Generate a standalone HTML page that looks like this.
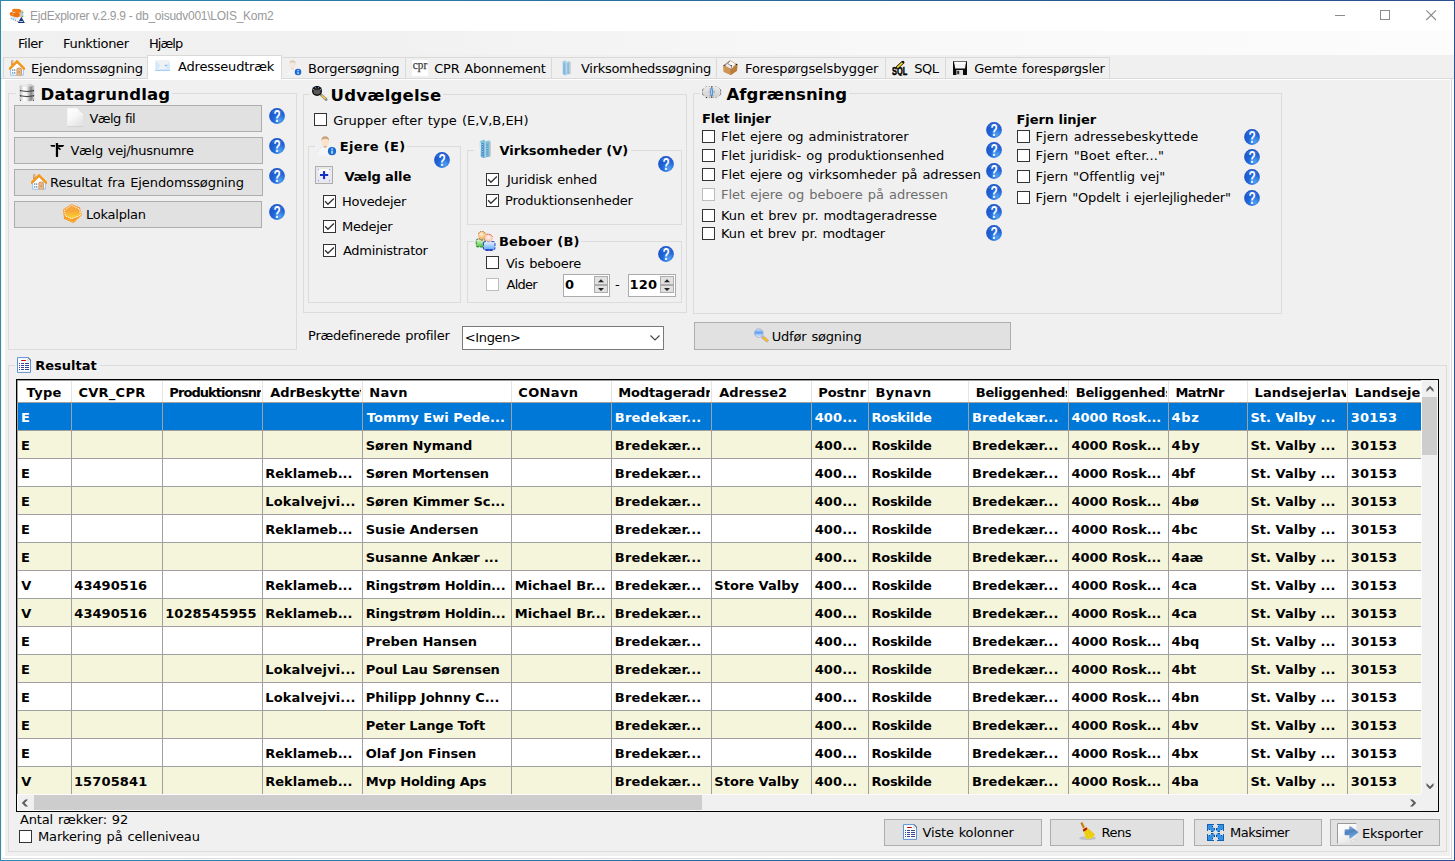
<!DOCTYPE html>
<html lang="da"><head><meta charset="utf-8"><title>EjdExplorer v.2.9.9</title>
<style>
html,body{margin:0;padding:0}
body{width:1455px;height:861px;overflow:hidden;background:#f0f0f0;position:relative;font-family:"DejaVu Sans","Liberation Sans",sans-serif;font-size:13px;line-height:16px;color:#000}
div,span,svg.ic{position:absolute;box-sizing:content-box}
span{white-space:pre;display:block}
.b{font-weight:bold}
.h{font-size:16.5px;line-height:20px}
.gb{border:1px solid #dcdcdc}
.btn{background:#e1e1e1;border:1px solid #adadad}
.cb{width:11px;height:11px;border:1px solid #333;background:#fff}
.cb svg{position:absolute;left:0;top:0}
.ic svg{display:block}
.clip{overflow:hidden}
.sp{width:14px;height:9px;background:#e1e1e1;outline:1px solid #adadad;outline-offset:-1px}
</style></head>
<body>
<svg width="0" height="0" style="position:absolute"><defs><radialGradient id="hg" cx="0.68" cy="0.78" r="0.75"><stop offset="0" stop-color="#4da2f2"/><stop offset="0.55" stop-color="#2166d9"/><stop offset="1" stop-color="#1d54c8"/></radialGradient><linearGradient id="silver" x1="0" x2="1" y1="0" y2="0"><stop offset="0" stop-color="#b9b9b9"/><stop offset="0.28" stop-color="#ffffff"/><stop offset="0.48" stop-color="#f1f1f1"/><stop offset="0.78" stop-color="#858585"/><stop offset="1" stop-color="#d2d2d2"/></linearGradient><linearGradient id="pg" x1="0" x2="0.6" y1="0" y2="1"><stop offset="0" stop-color="#ffffff"/><stop offset="0.5" stop-color="#f8f8f8"/><stop offset="1" stop-color="#e4e4e4"/></linearGradient><linearGradient id="hx" x1="0" x2="0" y1="0" y2="1"><stop offset="0" stop-color="#f8a040"/><stop offset="0.45" stop-color="#f7a838"/><stop offset="1" stop-color="#f8d830"/></linearGradient><linearGradient id="lens" x1="0" x2="0" y1="0" y2="1"><stop offset="0" stop-color="#d4f3ff"/><stop offset="0.45" stop-color="#5d9cf2"/><stop offset="0.62" stop-color="#8fc0f6"/><stop offset="1" stop-color="#f4faff"/></linearGradient><linearGradient id="arr" x1="0" x2="0.3" y1="0" y2="1"><stop offset="0" stop-color="#a6cdea"/><stop offset="0.5" stop-color="#4f80bd"/><stop offset="1" stop-color="#6ea6e2"/></linearGradient><linearGradient id="gb" x1="0" x2="0" y1="0" y2="1"><stop offset="0" stop-color="#e9fbe0"/><stop offset="1" stop-color="#4fc03a"/></linearGradient><linearGradient id="bb" x1="0" x2="0" y1="0" y2="1"><stop offset="0" stop-color="#eaf5ff"/><stop offset="1" stop-color="#5aa6f8"/></linearGradient><radialGradient id="hd1" cx="0.45" cy="0.4" r="0.6"><stop offset="0" stop-color="#fff0d8"/><stop offset="1" stop-color="#eeb060"/></radialGradient><radialGradient id="hd2" cx="0.45" cy="0.4" r="0.6"><stop offset="0" stop-color="#fff4f0"/><stop offset="1" stop-color="#f6c0a8"/></radialGradient><linearGradient id="pl" x1="0" x2="0" y1="0" y2="1"><stop offset="0" stop-color="#ffffff"/><stop offset="0.5" stop-color="#ececf0"/><stop offset="1" stop-color="#e6e6fb"/></linearGradient><linearGradient id="vn" x1="0" x2="0" y1="0" y2="1"><stop offset="0" stop-color="#ececec"/><stop offset="1" stop-color="#cfcfcf"/></linearGradient></defs></svg>
<div style="left:0px;top:0px;width:1455px;height:861px;background:linear-gradient(90deg,#2d8bb0 0%,#297aa4 25%,#296a9c 51%,#295692 77%,#2b4f8f 100%);"></div>
<div style="left:1px;top:1px;width:1453px;height:859px;background:#f0f0f0;"></div>
<div style="left:1px;top:1px;width:1453px;height:30px;background:#fff;"></div>
<div class="ic" style="left:9px;top:8px"><svg width="16" height="16" viewBox="0 0 16 16"><polygon points="1.1,7 9.8,9 9.8,14 5.5,13.2 1.1,11.4" fill="#eaf2fb"/><polygon points="2,8.5 4.5,9 6,12.6 3,11.8" fill="#cfe6fb"/><path d="M5.4 9.6 L6.6 11.6" stroke="#9cc8f8" stroke-width="1" fill="none"/><circle cx="2.3" cy="10.5" r="0.5" fill="#888"/><circle cx="4.4" cy="11.5" r="0.5" fill="#888"/><circle cx="6.4" cy="12.5" r="0.5" fill="#888"/><circle cx="8.3" cy="13.5" r="0.5" fill="#888"/><polygon points="10.6,2 14.4,2.8 14.4,9.5 10.6,9" fill="#c4c8cc"/><polygon points="3.2,1.6 5,0.8 10.6,1 12.2,2.6 11.6,4.8 8,5 3.4,4" fill="#f27a10"/><polygon points="0.8,4.8 2.4,3.9 8.6,4.4 11,5.8 10.6,8.6 8.4,9.4 5,8.8 1,7.2" fill="#ee720c"/><rect x="3.6" y="3.9" width="2.6" height="0.9" fill="#f4d8c0"/><rect x="3.2" y="5.9" width="1.2" height="0.8" fill="#fbe4d0"/><circle cx="13.5" cy="4.5" r="0.6" fill="#3ea51c"/><circle cx="13.5" cy="8.3" r="0.6" fill="#3ea51c"/><polygon points="12.3,8.8 15.8,15 8.8,15" fill="#14307a"/><rect x="10.4" y="13" width="3.6" height="0.8" fill="#f4f6fb"/><polygon points="12.3,10.4 13,11.8 11.6,11.8" fill="#3a55a0"/></svg></div>
<span style="left:30.1px;top:8px;color:#999;font-family:'Liberation Sans',sans-serif;font-size:12px;line-height:16px;letter-spacing:-0.256px;">EjdExplorer v.2.9.9 - db_oisudv001\LOIS_Kom2</span>
<svg class="ic" style="left:1330px;top:5px" width="112" height="22" viewBox="0 0 112 22"><path d="M5 10.5H15" stroke="#8a8a8a" fill="none"/><rect x="50.5" y="5.5" width="9" height="9" stroke="#8a8a8a" fill="none"/><path d="M96.3 5.3L106 15M106 5.3L96.3 15" stroke="#8a8a8a" stroke-width="1.1" fill="none"/></svg>
<div style="left:1px;top:31px;width:1453px;height:24px;background:linear-gradient(90deg,#f0f0f0 0%,#f1f1f1 25%,#f8f8f8 60%,#fcfcfc 100%);"></div>
<span style="left:18.05px;top:36px;letter-spacing:-0.488px;">Filer</span>
<span style="left:63.05px;top:36px;letter-spacing:-0.328px;">Funktioner</span>
<span style="left:149.05px;top:36px;letter-spacing:-0.963px;">Hjælp</span>
<div style="left:1px;top:78px;width:1453px;height:1px;background:#d9d9d9;"></div>
<div style="left:1px;top:79px;width:1453px;height:781px;background:#fff;"></div>
<div style="left:5px;top:80px;width:1445px;height:776px;background:#f0f0f0;"></div>
<div style="left:1451px;top:79px;width:1px;height:780px;background:#d9d9d9;"></div>
<div style="left:2px;top:858px;width:1450px;height:1px;background:#d9d9d9;"></div>
<div style="left:1px;top:79px;width:1px;height:781px;background:#f7f3f1;"></div>
<div style="left:3px;top:57px;width:143px;height:20px;background:#f0f0f0;border:1px solid #d9d9d9;border-bottom:0;"></div>
<div class="ic" style="left:9px;top:60px"><svg width="16" height="16" viewBox="0 0 16 16"><rect x="2.2" y="0.4" width="2.2" height="4.6" fill="#c98c56"/><rect x="2.9" y="0.9" width="0.8" height="2.6" fill="#ecd2b4"/><polygon points="8,2.6 14.4,9 14.4,15.2 1.6,15.2 1.6,9" fill="#fdfeff" stroke="#8ebdf2" stroke-width="0.9"/><path d="M0.7 8.7 L8 1.4 L15.3 8.7" fill="none" stroke="#f8920a" stroke-width="2.3" stroke-linecap="round" stroke-linejoin="miter"/><path d="M0.9 8.5 L8 1.4 L15.1 8.5" fill="none" stroke="#fdb640" stroke-width="0.7" stroke-dasharray="0.9 0.9"/><path d="M7.4 15.4 V9.8 Q7.4 7.6 10.2 7.6 Q13 7.6 13 9.8 V15.4 Z" fill="#d49c66"/><path d="M8.4 15.4 V10 Q8.4 8.6 10.2 8.6 Q12 8.6 12 10 V15.4 Z" fill="#e2b888"/><rect x="9.7" y="11.6" width="0.9" height="0.9" fill="#8a5a30"/><rect x="3.1" y="9.3" width="1.2" height="1.6" fill="#6a8ea6"/><rect x="5.1" y="9.3" width="1.2" height="1.6" fill="#6a8ea6"/><rect x="3.1" y="12.1" width="1.2" height="1.6" fill="#6a8ea6"/><rect x="5.1" y="12.1" width="1.2" height="1.6" fill="#6a8ea6"/></svg></div>
<span style="left:31.05px;top:61px;letter-spacing:-0.211px;">Ejendomssøgning</span>
<div style="left:281px;top:57px;width:123px;height:20px;background:#f0f0f0;border:1px solid #d9d9d9;border-bottom:0;"></div>
<div class="ic" style="left:286px;top:60px"><svg width="16.0" height="16.0" viewBox="0 0 16 16"><g opacity="0.5"><path d="M0.4 15.6 V12 Q0.6 9.2 4.4 8.6 L8.8 8.6 Q11 9 11.4 11 V15.6Z" fill="#f6f6fa"/><path d="M0.8 13 Q1.2 10 3.6 9.2" fill="none" stroke="#c8d0ee" stroke-width="0.7" stroke-dasharray="1 1"/><rect x="5.2" y="7" width="2.6" height="2.6" fill="#efd0b0"/><rect x="5.4" y="7.6" width="2.2" height="0.9" fill="#b09870"/><ellipse cx="6.5" cy="4.3" rx="3.1" ry="3.9" fill="#fbe2cc"/><path d="M3.5 3.6 Q3.6 0.2 6.6 0.2 Q9.6 0.3 9.6 3.8 Q8.6 2 6.4 2.2 Q4.4 2.2 3.5 3.6Z" fill="#c9a27a"/></g><circle cx="12" cy="12.1" r="3.25" fill="#1565d2"/><circle cx="12" cy="12.1" r="2.4" fill="#1f7ae0" opacity="0.6"/><rect x="11.5" y="11.7" width="1.1" height="2.5" fill="#f4ecd8"/><rect x="11.5" y="9.9" width="1.1" height="1.1" fill="#fff"/></svg></div>
<span style="left:308.05px;top:61px;letter-spacing:-0.288px;">Borgersøgning</span>
<div style="left:405px;top:57px;width:145px;height:20px;background:#f0f0f0;border:1px solid #d9d9d9;border-bottom:0;"></div>
<div class="ic" style="left:412px;top:60px"><svg width="16" height="16" viewBox="0 0 16 16"><rect x="0" y="0" width="16" height="16" fill="#fff"/><text x="0.8" y="9" font-family="'Liberation Serif',serif" font-size="11.6" fill="#3c3c3c" stroke="#3c3c3c" stroke-width="0.25" textLength="14.4" lengthAdjust="spacingAndGlyphs">cpr</text></svg></div>
<span style="left:434.2px;top:61px;letter-spacing:-0.238px;word-spacing:1.0px;">CPR Abonnement</span>
<div style="left:551px;top:57px;width:164px;height:20px;background:#f0f0f0;border:1px solid #d9d9d9;border-bottom:0;"></div>
<div class="ic" style="left:559px;top:60px"><svg width="16.0" height="16.0" viewBox="0 0 16 16"><g opacity="0.7"><polygon points="3,2 6,0.3 7.6,1.4 7.6,15.2 5.2,15.2 3.3,13.6" fill="#86c4dc"/><polygon points="4.3,3 6.2,3.4 6.2,14.8 4.3,14" fill="#3f86c8"/><polygon points="3.1,2.4 4.1,3 4.1,13.8 3.3,13.2" fill="#cfe6f2"/><polygon points="7.6,2 10.4,1 11.2,1.6 11.2,14.2 7.6,14.6" fill="#8fccd8"/><polygon points="8.4,3 9.9,2.6 9.9,14 8.4,14.2" fill="#4f8fd0"/><rect x="11" y="2" width="0.7" height="12" fill="#b8b8b8"/><path d="M5.3 4 V14.4 M9.1 3.4 V13.6" stroke="#d8ecf8" stroke-width="0.6" stroke-dasharray="0.8 1.1" fill="none"/></g></svg></div>
<span style="left:581.01px;top:61px;letter-spacing:-0.289px;">Virksomhedssøgning</span>
<div style="left:716px;top:57px;width:168px;height:20px;background:#f0f0f0;border:1px solid #d9d9d9;border-bottom:0;"></div>
<div class="ic" style="left:722.5px;top:60px"><svg width="16" height="16" viewBox="0 0 16 16"><polygon points="0.4,5.6 7,0.2 14.4,4.6 14,10.8 7.8,15 0.7,11.8" fill="#c58a48"/><polygon points="0.4,5.6 7.6,9.4 7.8,15 0.7,11.8" fill="#cf9554"/><polygon points="7.6,9.4 14.4,4.6 14,10.8 7.8,15" fill="#b87c3c"/><polygon points="1.6,5.4 7,0.9 12.6,4 9,8.4 6,8" fill="#e8e8ea"/><polygon points="4.6,3 7,1 11.6,3.6 9,6.6" fill="#fafafa"/><path d="M2.6 4.8 L6.8 1.2 M5.4 4 L9 6.2 M8.2 5 L8.6 8" stroke="#222" stroke-width="0.9" stroke-dasharray="0.9 0.7" fill="none"/><circle cx="13.6" cy="4.4" r="0.7" fill="#111"/><rect x="0.6" y="4.9" width="1.6" height="0.9" fill="#222"/></svg></div>
<span style="left:745.05px;top:61px;letter-spacing:-0.111px;">Forespørgselsbygger</span>
<div style="left:885px;top:57px;width:59px;height:20px;background:#f0f0f0;border:1px solid #d9d9d9;border-bottom:0;"></div>
<div class="ic" style="left:892px;top:60px"><svg width="16" height="16" viewBox="0 0 16 16"><text x="0" y="15" font-family="'Liberation Sans',sans-serif" font-weight="bold" font-size="11.2" fill="#000" stroke="#000" stroke-width="0.5" textLength="15.2" lengthAdjust="spacingAndGlyphs">SQL</text><path d="M5.4 7.4 L10.8 2.4" stroke="#111" stroke-width="3.3" stroke-linecap="round" fill="none"/><path d="M5.2 7.6 L10.4 2.8" stroke="#fcd822" stroke-width="1.7" stroke-linecap="butt" fill="none"/></svg></div>
<span style="left:914.2px;top:61px;letter-spacing:-0.522px;">SQL</span>
<div style="left:945px;top:57px;width:163px;height:20px;background:#f0f0f0;border:1px solid #d9d9d9;border-bottom:0;"></div>
<div class="ic" style="left:952px;top:60px"><svg width="16" height="16" viewBox="0 0 16 16"><path d="M1 1.2 H15 V14.4 Q15 15.1 14.3 15.1 H1.7 Q1 15.1 1 14.4Z" fill="#0b0b0b"/><polygon points="2.1,1.7 14,1.7 13,8.6 3.2,8.6" fill="#f4f4f4"/><polygon points="2.4,1.9 13.7,1.9 13.4,4 2.8,4" fill="#ffffff"/><rect x="4.4" y="10" width="6.6" height="5.1" fill="#e2e2e2"/><rect x="5.2" y="10.8" width="2" height="3.4" fill="#2a2a2a"/></svg></div>
<span style="left:974.2px;top:61px;letter-spacing:-0.217px;word-spacing:1.0px;">Gemte forespørgsler</span>
<div style="left:147px;top:55px;width:133px;height:23px;background:#fff;border:1px solid #d9d9d9;border-bottom:0;"></div>
<div style="left:148px;top:79px;width:133px;height:1px;background:#fff;"></div>
<div class="ic" style="left:155px;top:58px"><svg width="16" height="16" viewBox="0 0 16 16"><rect x="0.2" y="2.2" width="14.8" height="10.8" fill="#eff1f3"/><polygon points="0.6,2.8 5.4,7.4 2.6,11 0.6,11.4" fill="#cfe8fe"/><polygon points="14.6,4.2 9.6,8.4 12.6,11.2 14.6,11.4" fill="#cfe8fe"/><rect x="9.8" y="6.9" width="2.2" height="1" fill="#78b0f0"/><rect x="0.2" y="11.2" width="14.8" height="0.9" fill="#d8ecfe"/><rect x="0.2" y="11.9" width="14.8" height="1.1" fill="#a6d0fa"/></svg></div>
<span style="left:178.01px;top:59px;letter-spacing:-0.2px;">Adresseudtræk</span>
<div class="gb" style="left:8px;top:93px;width:287px;height:255px"></div>
<div style="left:16px;top:93px;width:156px;height:1px;background:#f0f0f0"></div>
<div class="ic" style="left:18.5px;top:84px"><svg width="16" height="18" viewBox="0 0 16 18"><path d="M0.7 1.5 Q8 -0.9 15.3 1.5 V16 Q8 18.8 0.7 16Z" fill="url(#silver)"/><path d="M0.7 1.7 Q8 -0.9 15.3 1.7 Q8 3.6 0.7 1.7Z" fill="#e2e2e2" opacity="0.8"/><path d="M1 6.7 Q8 8.3 15 6.7" fill="none" stroke="#303030" stroke-width="0.9"/><path d="M1 11.8 Q8 13.4 15 11.8" fill="none" stroke="#303030" stroke-width="0.9"/><circle cx="1.4" cy="6.5" r="0.6" fill="#333"/><circle cx="14.6" cy="6.5" r="0.6" fill="#333"/><circle cx="1.4" cy="11.6" r="0.6" fill="#333"/><circle cx="14.6" cy="11.6" r="0.6" fill="#333"/><circle cx="1.5" cy="16.3" r="0.6" fill="#444"/><circle cx="14.5" cy="16.3" r="0.6" fill="#444"/></svg></div>
<span class="b h" style="left:40.6px;top:85px;letter-spacing:0.159px;">Datagrundlag</span>
<div class="btn" style="left:14px;top:105px;width:246px;height:25px"></div>
<div class="ic" style="left:67px;top:108px"><svg width="17" height="20" viewBox="0 0 17 20"><path d="M0.3 0.2 H11 L16 5 V18.8 H0.3Z" fill="url(#pg)"/><path d="M11 0.2 L16 5 H12 Q11 5 11 4Z" fill="#f2f2f2"/><path d="M11.2 0.4 L16 5" stroke="#b4b4b4" stroke-width="0.7" stroke-dasharray="1 0.8" fill="none"/><path d="M0.6 18.6 H16" stroke="#c4c4c4" stroke-width="0.6" fill="none"/></svg></div>
<span style="left:89.51px;top:111px;letter-spacing:-0.629px;word-spacing:1.0px;">Vælg fil</span>
<div class="btn" style="left:14px;top:137px;width:247px;height:25px"></div>
<div class="ic" style="left:50px;top:143px"><svg width="16" height="16" viewBox="0 0 16 16"><rect x="5.85" y="0.1" width="2.25" height="13.9" rx="0.4" fill="#000"/><path d="M0.3 1.9 H5 V3.8 H1.9 Q0.8 3.3 0.3 1.9Z" fill="#000"/><path d="M8.1 2.1 H14.2 Q13.8 3.6 12.4 4 H8.1Z" fill="#000"/><path d="M8.1 4 L10.2 5 L11 6.7 H9.2 L8.1 5.4Z" fill="#000"/></svg></div>
<span style="left:70.51px;top:143px;letter-spacing:-0.275px;word-spacing:1.0px;">Vælg vej/husnumre</span>
<div class="btn" style="left:14px;top:169px;width:247px;height:25px"></div>
<div class="ic" style="left:31px;top:174px"><svg width="16" height="16" viewBox="0 0 16 16"><rect x="2.2" y="0.4" width="2.2" height="4.6" fill="#c98c56"/><rect x="2.9" y="0.9" width="0.8" height="2.6" fill="#ecd2b4"/><polygon points="8,2.6 14.4,9 14.4,15.2 1.6,15.2 1.6,9" fill="#fdfeff" stroke="#8ebdf2" stroke-width="0.9"/><path d="M0.7 8.7 L8 1.4 L15.3 8.7" fill="none" stroke="#f8920a" stroke-width="2.3" stroke-linecap="round" stroke-linejoin="miter"/><path d="M0.9 8.5 L8 1.4 L15.1 8.5" fill="none" stroke="#fdb640" stroke-width="0.7" stroke-dasharray="0.9 0.9"/><path d="M7.4 15.4 V9.8 Q7.4 7.6 10.2 7.6 Q13 7.6 13 9.8 V15.4 Z" fill="#d49c66"/><path d="M8.4 15.4 V10 Q8.4 8.6 10.2 8.6 Q12 8.6 12 10 V15.4 Z" fill="#e2b888"/><rect x="9.7" y="11.6" width="0.9" height="0.9" fill="#8a5a30"/><rect x="3.1" y="9.3" width="1.2" height="1.6" fill="#6a8ea6"/><rect x="5.1" y="9.3" width="1.2" height="1.6" fill="#6a8ea6"/><rect x="3.1" y="12.1" width="1.2" height="1.6" fill="#6a8ea6"/><rect x="5.1" y="12.1" width="1.2" height="1.6" fill="#6a8ea6"/></svg></div>
<span style="left:50.05px;top:175px;letter-spacing:-0.093px;word-spacing:1.0px;">Resultat fra Ejendomssøgning</span>
<div class="btn" style="left:14px;top:201px;width:246px;height:25px"></div>
<div class="ic" style="left:63px;top:204px"><svg width="20" height="20" viewBox="0 0 20 20"><polygon points="8.4,0 17.1,3.4 18.9,11 10.5,19 1.1,14.9 0,5.5" fill="#f8982a"/><polygon points="8.4,1.3 16.8,5.1 17.5,11.4 8.4,14.7 2.5,12.1 1.3,6.2" fill="url(#hx)"/><polygon points="8.4,1.3 16.8,5.1 17.5,11.4 8.4,14.7 2.5,12.1 1.3,6.2" fill="none" stroke="#fff" stroke-width="0.9" stroke-dasharray="1.5 0.8"/><path d="M3 14.6 L10.4 17.6 L17 12.4" fill="none" stroke="#fbb030" stroke-width="1.2" opacity="0.8"/></svg></div>
<span style="left:86.05px;top:207px;letter-spacing:-0.244px;">Lokalplan</span>
<div class="ic" style="left:269px;top:108px"><svg width="16" height="16" viewBox="0 0 16 16"><circle cx="8" cy="8" r="7.9" fill="url(#hg)"/><path d="M2.2 5.4 A6.4 6.4 0 0 1 13.6 4.8 A9 9 0 0 0 2.2 5.4Z" fill="#5f93ea" opacity="0.55"/><text transform="translate(8.05,14) scale(0.76,1)" text-anchor="middle" font-family="'Liberation Sans',sans-serif" font-weight="bold" font-size="15.6" fill="#fdfdff">?</text></svg></div>
<div class="ic" style="left:269px;top:138px"><svg width="16" height="16" viewBox="0 0 16 16"><circle cx="8" cy="8" r="7.9" fill="url(#hg)"/><path d="M2.2 5.4 A6.4 6.4 0 0 1 13.6 4.8 A9 9 0 0 0 2.2 5.4Z" fill="#5f93ea" opacity="0.55"/><text transform="translate(8.05,14) scale(0.76,1)" text-anchor="middle" font-family="'Liberation Sans',sans-serif" font-weight="bold" font-size="15.6" fill="#fdfdff">?</text></svg></div>
<div class="ic" style="left:269px;top:168px"><svg width="16" height="16" viewBox="0 0 16 16"><circle cx="8" cy="8" r="7.9" fill="url(#hg)"/><path d="M2.2 5.4 A6.4 6.4 0 0 1 13.6 4.8 A9 9 0 0 0 2.2 5.4Z" fill="#5f93ea" opacity="0.55"/><text transform="translate(8.05,14) scale(0.76,1)" text-anchor="middle" font-family="'Liberation Sans',sans-serif" font-weight="bold" font-size="15.6" fill="#fdfdff">?</text></svg></div>
<div class="ic" style="left:269px;top:204px"><svg width="16" height="16" viewBox="0 0 16 16"><circle cx="8" cy="8" r="7.9" fill="url(#hg)"/><path d="M2.2 5.4 A6.4 6.4 0 0 1 13.6 4.8 A9 9 0 0 0 2.2 5.4Z" fill="#5f93ea" opacity="0.55"/><text transform="translate(8.05,14) scale(0.76,1)" text-anchor="middle" font-family="'Liberation Sans',sans-serif" font-weight="bold" font-size="15.6" fill="#fdfdff">?</text></svg></div>
<div class="gb" style="left:303px;top:94px;width:382px;height:217px"></div>
<div style="left:310px;top:94px;width:133px;height:1px;background:#f0f0f0"></div>
<div class="ic" style="left:312px;top:86px"><svg width="16" height="16" viewBox="0 0 16 16"><path d="M9 8.8 L14 13.4" stroke="#8a8a9a" stroke-width="2.9" stroke-linecap="round" fill="none"/><path d="M9.6 9.4 L13.6 13" stroke="#ecca38" stroke-width="1.7" stroke-linecap="butt" fill="none"/><circle cx="5" cy="4.9" r="5" fill="#0e0e0e"/><ellipse cx="5" cy="5.6" rx="3.5" ry="3" fill="#5a5a5a"/><ellipse cx="5" cy="3.3" rx="2.6" ry="1" fill="#2a2a2a"/><circle cx="1.6" cy="3.6" r="0.55" fill="#7ab0f4"/><circle cx="3.6" cy="1.6" r="0.55" fill="#7ab0f4"/><circle cx="6.4" cy="1.6" r="0.55" fill="#7ab0f4"/><circle cx="8.5" cy="3.6" r="0.55" fill="#7ab0f4"/></svg></div>
<span class="b h" style="left:330.6px;top:86px;letter-spacing:0.211px;">Udvælgelse</span>
<div class="cb" style="left:314px;top:113px;border-color:#333"></div>
<span style="left:333.2px;top:113px;word-spacing:1.0px;">Grupper efter type (E,V,B,EH)</span>
<div class="gb" style="left:308px;top:146px;width:151px;height:155px"></div>
<div style="left:315px;top:146px;width:92px;height:1px;background:#f0f0f0"></div>
<div class="ic" style="left:317px;top:135.5px"><svg width="20.0" height="20.0" viewBox="0 0 16 16"><g><path d="M0.4 15.6 V12 Q0.6 9.2 4.4 8.6 L8.8 8.6 Q11 9 11.4 11 V15.6Z" fill="#f6f6fa"/><path d="M0.8 13 Q1.2 10 3.6 9.2" fill="none" stroke="#c8d0ee" stroke-width="0.7" stroke-dasharray="1 1"/><rect x="5.2" y="7" width="2.6" height="2.6" fill="#efd0b0"/><rect x="5.4" y="7.6" width="2.2" height="0.9" fill="#b09870"/><ellipse cx="6.5" cy="4.3" rx="3.1" ry="3.9" fill="#fbe2cc"/><path d="M3.5 3.6 Q3.6 0.2 6.6 0.2 Q9.6 0.3 9.6 3.8 Q8.6 2 6.4 2.2 Q4.4 2.2 3.5 3.6Z" fill="#c9a27a"/></g><circle cx="12" cy="12.1" r="3.25" fill="#1565d2"/><circle cx="12" cy="12.1" r="2.4" fill="#1f7ae0" opacity="0.6"/><rect x="11.5" y="11.7" width="1.1" height="2.5" fill="#f4ecd8"/><rect x="11.5" y="9.9" width="1.1" height="1.1" fill="#fff"/></svg></div>
<span class="b" style="left:339.75px;top:139px;letter-spacing:0.353px;">Ejere (E)</span>
<div class="ic" style="left:434px;top:152px"><svg width="16" height="16" viewBox="0 0 16 16"><circle cx="8" cy="8" r="7.9" fill="url(#hg)"/><path d="M2.2 5.4 A6.4 6.4 0 0 1 13.6 4.8 A9 9 0 0 0 2.2 5.4Z" fill="#5f93ea" opacity="0.55"/><text transform="translate(8.05,14) scale(0.76,1)" text-anchor="middle" font-family="'Liberation Sans',sans-serif" font-weight="bold" font-size="15.6" fill="#fdfdff">?</text></svg></div>
<div class="ic" style="left:315px;top:166px"><svg width="18" height="18" viewBox="0 0 18 18"><rect x="0.5" y="0.5" width="17" height="17" fill="#e8e8e8" stroke="#adadad"/><rect x="3" y="3" width="12" height="12.4" fill="url(#pl)"/><rect x="5" y="8" width="8.2" height="2" fill="#1232c4"/><rect x="8" y="5.1" width="2.1" height="8" fill="#1232c4"/><rect x="3" y="3.2" width="1" height="1" fill="#6a88f0"/><rect x="14" y="3.2" width="1" height="1" fill="#6a88f0"/><rect x="3" y="14.2" width="1" height="1" fill="#6a88f0"/><rect x="14" y="14.2" width="1" height="1" fill="#6a88f0"/></svg></div>
<span class="b" style="left:344.39px;top:169px;letter-spacing:-0.111px;">Vælg alle</span>
<div class="cb" style="left:323px;top:195px;border-color:#333"><svg width="11" height="11" viewBox="0 0 11 11"><path d="M1.1 5.3 L3.9 8.2 L9.9 2.4" fill="none" stroke="#333" stroke-width="1.35"/></svg></div>
<span style="left:342.05px;top:194px;letter-spacing:-0.281px;">Hovedejer</span>
<div class="cb" style="left:323px;top:220px;border-color:#333"><svg width="11" height="11" viewBox="0 0 11 11"><path d="M1.1 5.3 L3.9 8.2 L9.9 2.4" fill="none" stroke="#333" stroke-width="1.35"/></svg></div>
<span style="left:342.05px;top:219px;letter-spacing:-0.332px;">Medejer</span>
<div class="cb" style="left:323px;top:244px;border-color:#333"><svg width="11" height="11" viewBox="0 0 11 11"><path d="M1.1 5.3 L3.9 8.2 L9.9 2.4" fill="none" stroke="#333" stroke-width="1.35"/></svg></div>
<span style="left:343.01px;top:243px;letter-spacing:-0.309px;">Administrator</span>
<div class="gb" style="left:467px;top:150px;width:213px;height:73px"></div>
<div style="left:474px;top:150px;width:157px;height:1px;background:#f0f0f0"></div>
<div class="ic" style="left:476px;top:139.4px"><svg width="20.0" height="20.0" viewBox="0 0 16 16"><g><polygon points="3,2 6,0.3 7.6,1.4 7.6,15.2 5.2,15.2 3.3,13.6" fill="#86c4dc"/><polygon points="4.3,3 6.2,3.4 6.2,14.8 4.3,14" fill="#3f86c8"/><polygon points="3.1,2.4 4.1,3 4.1,13.8 3.3,13.2" fill="#cfe6f2"/><polygon points="7.6,2 10.4,1 11.2,1.6 11.2,14.2 7.6,14.6" fill="#8fccd8"/><polygon points="8.4,3 9.9,2.6 9.9,14 8.4,14.2" fill="#4f8fd0"/><rect x="11" y="2" width="0.7" height="12" fill="#b8b8b8"/><path d="M5.3 4 V14.4 M9.1 3.4 V13.6" stroke="#d8ecf8" stroke-width="0.6" stroke-dasharray="0.8 1.1" fill="none"/></g></svg></div>
<span class="b" style="left:499.39px;top:143px;letter-spacing:0.019px;">Virksomheder (V)</span>
<div class="ic" style="left:658px;top:156px"><svg width="16" height="16" viewBox="0 0 16 16"><circle cx="8" cy="8" r="7.9" fill="url(#hg)"/><path d="M2.2 5.4 A6.4 6.4 0 0 1 13.6 4.8 A9 9 0 0 0 2.2 5.4Z" fill="#5f93ea" opacity="0.55"/><text transform="translate(8.05,14) scale(0.76,1)" text-anchor="middle" font-family="'Liberation Sans',sans-serif" font-weight="bold" font-size="15.6" fill="#fdfdff">?</text></svg></div>
<div class="cb" style="left:486px;top:173px;border-color:#333"><svg width="11" height="11" viewBox="0 0 11 11"><path d="M1.1 5.3 L3.9 8.2 L9.9 2.4" fill="none" stroke="#333" stroke-width="1.35"/></svg></div>
<span style="left:506.99px;top:172px;letter-spacing:-0.222px;word-spacing:1.0px;">Juridisk enhed</span>
<div class="cb" style="left:486px;top:194px;border-color:#333"><svg width="11" height="11" viewBox="0 0 11 11"><path d="M1.1 5.3 L3.9 8.2 L9.9 2.4" fill="none" stroke="#333" stroke-width="1.35"/></svg></div>
<span style="left:505.05px;top:193px;letter-spacing:-0.147px;">Produktionsenheder</span>
<div class="gb" style="left:467px;top:241px;width:213px;height:60px"></div>
<div style="left:474px;top:241px;width:107px;height:1px;background:#f0f0f0"></div>
<div class="ic" style="left:475px;top:231px"><svg width="21" height="20" viewBox="0 0 21 20"><path d="M1.2 9.4 Q1.2 8 3.4 8 H8.6 Q10 8 10 9.4 V14.6 Q10 16 8.6 16 H3 Q1.2 16 1.2 14.6Z" fill="url(#gb)" stroke="#0c6a10" stroke-width="0.8" stroke-dasharray="3 1.4"/><circle cx="6.9" cy="4.2" r="3.9" fill="url(#hd1)"/><path d="M3.4 2.8 Q4.6 0.3 7 0.3 Q9.6 0.5 10.4 2.8" fill="none" stroke="#8a5a20" stroke-width="0.8" stroke-dasharray="1.4 1"/><path d="M4 7.6 L6.6 9.6 L9.4 7.8" fill="none" stroke="#e01010" stroke-width="0.9" stroke-dasharray="1.2 0.8"/><path d="M8.4 12 Q8.4 10.6 10.4 10.6 H18 Q20 10.6 20 12 V17 Q20 19.2 17 19.2 H11 Q8.4 19.2 8.4 17Z" fill="url(#bb)" stroke="#1232c4" stroke-width="0.9" stroke-dasharray="3 1.2"/><path d="M10.6 19 H17.6" stroke="#0a0a9a" stroke-width="1" fill="none"/><circle cx="14" cy="7" r="3.8" fill="url(#hd2)"/><path d="M11.4 3.4 Q14.6 2.4 17.6 5.6" fill="none" stroke="#e01818" stroke-width="0.9" stroke-dasharray="1.3 0.8"/><path d="M11 9 Q12 10.4 13 10.6" fill="none" stroke="#f08060" stroke-width="0.7" stroke-dasharray="1 0.8"/></svg></div>
<span class="b" style="left:498.95px;top:234px;letter-spacing:0.227px;">Beboer (B)</span>
<div class="ic" style="left:658px;top:246px"><svg width="16" height="16" viewBox="0 0 16 16"><circle cx="8" cy="8" r="7.9" fill="url(#hg)"/><path d="M2.2 5.4 A6.4 6.4 0 0 1 13.6 4.8 A9 9 0 0 0 2.2 5.4Z" fill="#5f93ea" opacity="0.55"/><text transform="translate(8.05,14) scale(0.76,1)" text-anchor="middle" font-family="'Liberation Sans',sans-serif" font-weight="bold" font-size="15.6" fill="#fdfdff">?</text></svg></div>
<div class="cb" style="left:486px;top:256px;border-color:#333"></div>
<span style="left:506.01px;top:256px;letter-spacing:-0.241px;word-spacing:1.0px;">Vis beboere</span>
<div class="cb" style="left:486px;top:278px;border-color:#bcbcbc"></div>
<span style="left:506.51px;top:277px;letter-spacing:-0.726px;">Alder</span>
<div style="left:563px;top:274px;width:45px;height:21px;background:#fff;border:1px solid #ababab;"></div>
<span class="b" style="left:565.0px;top:277px;">0</span>
<div class="sp" style="left:594px;top:276px"></div>
<div class="sp" style="left:594px;top:285px;height:8px"></div>
<svg class="ic" style="left:594px;top:276px" width="14" height="19" viewBox="0 0 14 19"><path d="M4 6.3L7 3.3L10 6.3Z M4 12L7 15L10 12Z" fill="#222"/></svg>
<span style="left:615.0px;top:277px;letter-spacing:0.15px;">-</span>
<div style="left:628px;top:274px;width:46px;height:21px;background:#fff;border:1px solid #ababab;"></div>
<span class="b" style="left:629.6px;top:277px;letter-spacing:0.136px;">120</span>
<div class="sp" style="left:660px;top:276px"></div>
<div class="sp" style="left:660px;top:285px;height:8px"></div>
<svg class="ic" style="left:660px;top:276px" width="14" height="19" viewBox="0 0 14 19"><path d="M4 6.3L7 3.3L10 6.3Z M4 12L7 15L10 12Z" fill="#222"/></svg>
<span style="left:308.05px;top:328px;letter-spacing:-0.262px;word-spacing:1.0px;">Prædefinerede profiler</span>
<div style="left:462px;top:326px;width:200px;height:22px;background:#fff;border:1px solid #7a7a7a;"></div>
<span style="left:464.7px;top:330px;letter-spacing:-0.337px;">&lt;Ingen&gt;</span>
<svg class="ic" style="left:649px;top:333px" width="12" height="10" viewBox="0 0 12 10"><path d="M1.5 2.5L6 7L10.5 2.5" fill="none" stroke="#444" stroke-width="1.1"/></svg>
<div class="gb" style="left:693px;top:93px;width:587px;height:219px"></div>
<div style="left:700px;top:93px;width:149px;height:1px;background:#f0f0f0"></div>
<div class="ic" style="left:702px;top:86px"><svg width="20" height="13" viewBox="0 0 20 13"><circle cx="6.3" cy="6" r="5.8" fill="url(#vn)"/><circle cx="12.9" cy="6" r="5.8" fill="url(#vn)"/><circle cx="6.3" cy="6" r="5.8" fill="none" stroke="#444" stroke-width="0.7" stroke-dasharray="1.2 2.2" opacity="0.8"/><circle cx="12.9" cy="6" r="5.8" fill="none" stroke="#444" stroke-width="0.7" stroke-dasharray="1.2 2.2" opacity="0.8"/><path d="M9.6 1 Q12.6 6 9.6 11 Q6.6 6 9.6 1Z" fill="#3a80d4"/><path d="M9.6 2 Q11.2 6 9.6 10 Q8 6 9.6 2Z" fill="#a8d4f8"/><circle cx="9.6" cy="0.8" r="0.65" fill="#222"/><circle cx="9.6" cy="11.2" r="0.65" fill="#222"/><circle cx="0.6" cy="4" r="0.6" fill="#222"/><circle cx="0.6" cy="8" r="0.6" fill="#222"/><circle cx="18.6" cy="4" r="0.6" fill="#222"/><circle cx="18.6" cy="8" r="0.6" fill="#222"/><circle cx="4.4" cy="11.6" r="0.65" fill="#222"/></svg></div>
<span class="b h" style="left:726.48px;top:85px;letter-spacing:0.097px;">Afgrænsning</span>
<span class="b" style="left:701.95px;top:111px;letter-spacing:-0.182px;">Flet linjer</span>
<div class="cb" style="left:702px;top:130px;border-color:#333"></div>
<span style="left:721.05px;top:129px;letter-spacing:-0.071px;word-spacing:1.0px;">Flet ejere og administratorer</span>
<div class="cb" style="left:702px;top:149px;border-color:#333"></div>
<span style="left:721.05px;top:148px;letter-spacing:-0.059px;word-spacing:1.0px;">Flet juridisk- og produktionsenhed</span>
<div class="cb" style="left:702px;top:168px;border-color:#333"></div>
<span style="left:721.05px;top:167px;letter-spacing:-0.096px;word-spacing:1.0px;">Flet ejere og virksomheder på adressen</span>
<div class="cb" style="left:702px;top:188px;border-color:#bcbcbc"></div>
<span style="left:721.05px;top:187px;color:#6d6d6d;letter-spacing:-0.018px;word-spacing:1.0px;">Flet ejere og beboere på adressen</span>
<div class="cb" style="left:702px;top:209px;border-color:#333"></div>
<span style="left:721.05px;top:208px;letter-spacing:-0.065px;word-spacing:1.0px;">Kun et brev pr. modtageradresse</span>
<div class="cb" style="left:702px;top:227px;border-color:#333"></div>
<span style="left:721.05px;top:226px;letter-spacing:-0.128px;word-spacing:1.0px;">Kun et brev pr. modtager</span>
<div class="ic" style="left:986px;top:122px"><svg width="16" height="16" viewBox="0 0 16 16"><circle cx="8" cy="8" r="7.9" fill="url(#hg)"/><path d="M2.2 5.4 A6.4 6.4 0 0 1 13.6 4.8 A9 9 0 0 0 2.2 5.4Z" fill="#5f93ea" opacity="0.55"/><text transform="translate(8.05,14) scale(0.76,1)" text-anchor="middle" font-family="'Liberation Sans',sans-serif" font-weight="bold" font-size="15.6" fill="#fdfdff">?</text></svg></div>
<div class="ic" style="left:986px;top:142px"><svg width="16" height="16" viewBox="0 0 16 16"><circle cx="8" cy="8" r="7.9" fill="url(#hg)"/><path d="M2.2 5.4 A6.4 6.4 0 0 1 13.6 4.8 A9 9 0 0 0 2.2 5.4Z" fill="#5f93ea" opacity="0.55"/><text transform="translate(8.05,14) scale(0.76,1)" text-anchor="middle" font-family="'Liberation Sans',sans-serif" font-weight="bold" font-size="15.6" fill="#fdfdff">?</text></svg></div>
<div class="ic" style="left:986px;top:163px"><svg width="16" height="16" viewBox="0 0 16 16"><circle cx="8" cy="8" r="7.9" fill="url(#hg)"/><path d="M2.2 5.4 A6.4 6.4 0 0 1 13.6 4.8 A9 9 0 0 0 2.2 5.4Z" fill="#5f93ea" opacity="0.55"/><text transform="translate(8.05,14) scale(0.76,1)" text-anchor="middle" font-family="'Liberation Sans',sans-serif" font-weight="bold" font-size="15.6" fill="#fdfdff">?</text></svg></div>
<div class="ic" style="left:986px;top:184px"><svg width="16" height="16" viewBox="0 0 16 16"><circle cx="8" cy="8" r="7.9" fill="url(#hg)"/><path d="M2.2 5.4 A6.4 6.4 0 0 1 13.6 4.8 A9 9 0 0 0 2.2 5.4Z" fill="#5f93ea" opacity="0.55"/><text transform="translate(8.05,14) scale(0.76,1)" text-anchor="middle" font-family="'Liberation Sans',sans-serif" font-weight="bold" font-size="15.6" fill="#fdfdff">?</text></svg></div>
<div class="ic" style="left:986px;top:204px"><svg width="16" height="16" viewBox="0 0 16 16"><circle cx="8" cy="8" r="7.9" fill="url(#hg)"/><path d="M2.2 5.4 A6.4 6.4 0 0 1 13.6 4.8 A9 9 0 0 0 2.2 5.4Z" fill="#5f93ea" opacity="0.55"/><text transform="translate(8.05,14) scale(0.76,1)" text-anchor="middle" font-family="'Liberation Sans',sans-serif" font-weight="bold" font-size="15.6" fill="#fdfdff">?</text></svg></div>
<div class="ic" style="left:986px;top:225px"><svg width="16" height="16" viewBox="0 0 16 16"><circle cx="8" cy="8" r="7.9" fill="url(#hg)"/><path d="M2.2 5.4 A6.4 6.4 0 0 1 13.6 4.8 A9 9 0 0 0 2.2 5.4Z" fill="#5f93ea" opacity="0.55"/><text transform="translate(8.05,14) scale(0.76,1)" text-anchor="middle" font-family="'Liberation Sans',sans-serif" font-weight="bold" font-size="15.6" fill="#fdfdff">?</text></svg></div>
<span class="b" style="left:1016.45px;top:112px;letter-spacing:-0.041px;">Fjern linjer</span>
<div class="cb" style="left:1017px;top:130px;border-color:#333"></div>
<span style="left:1035.55px;top:129px;letter-spacing:0.093px;word-spacing:1.0px;">Fjern adressebeskyttede</span>
<div class="cb" style="left:1017px;top:149px;border-color:#333"></div>
<span style="left:1035.55px;top:148px;letter-spacing:0.093px;word-spacing:1.0px;">Fjern "Boet efter..."</span>
<div class="cb" style="left:1017px;top:170px;border-color:#333"></div>
<span style="left:1035.55px;top:169px;letter-spacing:-0.019px;word-spacing:1.0px;">Fjern "Offentlig vej"</span>
<div class="cb" style="left:1017px;top:191px;border-color:#333"></div>
<span style="left:1035.55px;top:190px;letter-spacing:-0.16px;word-spacing:1.0px;">Fjern "Opdelt i ejerlejligheder"</span>
<div class="ic" style="left:1244px;top:129px"><svg width="16" height="16" viewBox="0 0 16 16"><circle cx="8" cy="8" r="7.9" fill="url(#hg)"/><path d="M2.2 5.4 A6.4 6.4 0 0 1 13.6 4.8 A9 9 0 0 0 2.2 5.4Z" fill="#5f93ea" opacity="0.55"/><text transform="translate(8.05,14) scale(0.76,1)" text-anchor="middle" font-family="'Liberation Sans',sans-serif" font-weight="bold" font-size="15.6" fill="#fdfdff">?</text></svg></div>
<div class="ic" style="left:1244px;top:149px"><svg width="16" height="16" viewBox="0 0 16 16"><circle cx="8" cy="8" r="7.9" fill="url(#hg)"/><path d="M2.2 5.4 A6.4 6.4 0 0 1 13.6 4.8 A9 9 0 0 0 2.2 5.4Z" fill="#5f93ea" opacity="0.55"/><text transform="translate(8.05,14) scale(0.76,1)" text-anchor="middle" font-family="'Liberation Sans',sans-serif" font-weight="bold" font-size="15.6" fill="#fdfdff">?</text></svg></div>
<div class="ic" style="left:1244px;top:169px"><svg width="16" height="16" viewBox="0 0 16 16"><circle cx="8" cy="8" r="7.9" fill="url(#hg)"/><path d="M2.2 5.4 A6.4 6.4 0 0 1 13.6 4.8 A9 9 0 0 0 2.2 5.4Z" fill="#5f93ea" opacity="0.55"/><text transform="translate(8.05,14) scale(0.76,1)" text-anchor="middle" font-family="'Liberation Sans',sans-serif" font-weight="bold" font-size="15.6" fill="#fdfdff">?</text></svg></div>
<div class="ic" style="left:1244px;top:190px"><svg width="16" height="16" viewBox="0 0 16 16"><circle cx="8" cy="8" r="7.9" fill="url(#hg)"/><path d="M2.2 5.4 A6.4 6.4 0 0 1 13.6 4.8 A9 9 0 0 0 2.2 5.4Z" fill="#5f93ea" opacity="0.55"/><text transform="translate(8.05,14) scale(0.76,1)" text-anchor="middle" font-family="'Liberation Sans',sans-serif" font-weight="bold" font-size="15.6" fill="#fdfdff">?</text></svg></div>
<div class="btn" style="left:694px;top:322px;width:315px;height:26px"></div>
<div class="ic" style="left:753px;top:328px"><svg width="16" height="16" viewBox="0 0 16 16"><path d="M9 8.4 L15 13.4" stroke="#b0b0c8" stroke-width="3.2" stroke-linecap="butt" fill="none"/><path d="M10 9.2 L14.6 13" stroke="#f4b424" stroke-width="2.4" stroke-linecap="butt" fill="none"/><path d="M10.6 9.8 L14.2 12.8" stroke="#fbd868" stroke-width="0.8" stroke-dasharray="0.9 0.9" fill="none"/><circle cx="5.8" cy="5.1" r="4.3" fill="url(#lens)" stroke="#a9accc" stroke-width="0.9"/></svg></div>
<span style="left:771.7px;top:329px;letter-spacing:-0.175px;word-spacing:1.0px;">Udfør søgning</span>
<div class="gb" style="left:8px;top:365px;width:1437px;height:485px"></div>
<div style="left:15px;top:365px;width:85px;height:1px;background:#f0f0f0"></div>
<div class="ic" style="left:17px;top:357px"><svg width="15" height="16" viewBox="0 0 15 16"><path d="M0.5 0.6 H11 L13.5 3 V15.4 H0.5Z" fill="#fdfeff" stroke="#5d92d4" stroke-width="1"/><path d="M10.8 0.4 L13.8 3.2" stroke="#222" stroke-width="1" stroke-dasharray="1 0.6" fill="none"/><polygon points="10.2,1.2 10.2,4.4 13,4.4" fill="#d4d8dc"/><rect x="4" y="3" width="5" height="1" rx="0.4" fill="#c00808"/><rect x="2" y="6.1" width="1" height="0.9" fill="#22338a"/><rect x="4" y="6.1" width="3" height="0.9" fill="#22338a"/><rect x="8" y="6.1" width="4" height="0.9" fill="#22338a"/><rect x="2" y="8.1" width="1" height="0.9" fill="#22338a"/><rect x="4" y="8.1" width="3" height="0.9" fill="#22338a"/><rect x="8" y="8.1" width="4" height="0.9" fill="#22338a"/><rect x="2" y="10.1" width="1" height="0.9" fill="#22338a"/><rect x="4" y="10.1" width="3" height="0.9" fill="#22338a"/><rect x="8" y="10.1" width="4" height="0.9" fill="#22338a"/><rect x="2" y="12.1" width="1" height="0.9" fill="#22338a"/><rect x="4" y="12.1" width="3" height="0.9" fill="#22338a"/><rect x="8" y="12.1" width="4" height="0.9" fill="#22338a"/></svg></div>
<span class="b" style="left:35.25px;top:358px;letter-spacing:0.007px;">Resultat</span>
<div style="left:16px;top:379px;width:1421px;height:431px;background:#fff;border:1px solid #000;"></div>
<div style="left:17px;top:403px;width:1404px;height:27px;background:#0078d7;"></div>
<div style="left:17px;top:430px;width:1404px;height:1px;background:#a0a0a0;"></div>
<div style="left:17px;top:431px;width:1404px;height:27px;background:#f5f5dc;"></div>
<div style="left:17px;top:458px;width:1404px;height:1px;background:#a0a0a0;"></div>
<div style="left:17px;top:459px;width:1404px;height:27px;background:#fff;"></div>
<div style="left:17px;top:486px;width:1404px;height:1px;background:#a0a0a0;"></div>
<div style="left:17px;top:487px;width:1404px;height:27px;background:#f5f5dc;"></div>
<div style="left:17px;top:514px;width:1404px;height:1px;background:#a0a0a0;"></div>
<div style="left:17px;top:515px;width:1404px;height:27px;background:#fff;"></div>
<div style="left:17px;top:542px;width:1404px;height:1px;background:#a0a0a0;"></div>
<div style="left:17px;top:543px;width:1404px;height:27px;background:#f5f5dc;"></div>
<div style="left:17px;top:570px;width:1404px;height:1px;background:#a0a0a0;"></div>
<div style="left:17px;top:571px;width:1404px;height:27px;background:#fff;"></div>
<div style="left:17px;top:598px;width:1404px;height:1px;background:#a0a0a0;"></div>
<div style="left:17px;top:599px;width:1404px;height:27px;background:#f5f5dc;"></div>
<div style="left:17px;top:626px;width:1404px;height:1px;background:#a0a0a0;"></div>
<div style="left:17px;top:627px;width:1404px;height:27px;background:#fff;"></div>
<div style="left:17px;top:654px;width:1404px;height:1px;background:#a0a0a0;"></div>
<div style="left:17px;top:655px;width:1404px;height:27px;background:#f5f5dc;"></div>
<div style="left:17px;top:682px;width:1404px;height:1px;background:#a0a0a0;"></div>
<div style="left:17px;top:683px;width:1404px;height:27px;background:#fff;"></div>
<div style="left:17px;top:710px;width:1404px;height:1px;background:#a0a0a0;"></div>
<div style="left:17px;top:711px;width:1404px;height:27px;background:#f5f5dc;"></div>
<div style="left:17px;top:738px;width:1404px;height:1px;background:#a0a0a0;"></div>
<div style="left:17px;top:739px;width:1404px;height:27px;background:#fff;"></div>
<div style="left:17px;top:766px;width:1404px;height:1px;background:#a0a0a0;"></div>
<div style="left:17px;top:767px;width:1404px;height:27px;background:#f5f5dc;"></div>
<div style="left:17px;top:794px;width:1404px;height:1px;background:#a0a0a0;"></div>
<div style="left:17px;top:402px;width:1404px;height:1px;background:#a0a0a0;"></div>
<div style="left:71px;top:380px;width:1px;height:22px;background:#e5e5e5;"></div>
<div style="left:71px;top:402px;width:1px;height:393px;background:#a0a0a0;"></div>
<div style="left:162px;top:380px;width:1px;height:22px;background:#e5e5e5;"></div>
<div style="left:162px;top:402px;width:1px;height:393px;background:#a0a0a0;"></div>
<div style="left:262px;top:380px;width:1px;height:22px;background:#e5e5e5;"></div>
<div style="left:262px;top:402px;width:1px;height:393px;background:#a0a0a0;"></div>
<div style="left:362px;top:380px;width:1px;height:22px;background:#e5e5e5;"></div>
<div style="left:362px;top:402px;width:1px;height:393px;background:#a0a0a0;"></div>
<div style="left:511px;top:380px;width:1px;height:22px;background:#e5e5e5;"></div>
<div style="left:511px;top:402px;width:1px;height:393px;background:#a0a0a0;"></div>
<div style="left:611px;top:380px;width:1px;height:22px;background:#e5e5e5;"></div>
<div style="left:611px;top:402px;width:1px;height:393px;background:#a0a0a0;"></div>
<div style="left:711px;top:380px;width:1px;height:22px;background:#e5e5e5;"></div>
<div style="left:711px;top:402px;width:1px;height:393px;background:#a0a0a0;"></div>
<div style="left:811px;top:380px;width:1px;height:22px;background:#e5e5e5;"></div>
<div style="left:811px;top:402px;width:1px;height:393px;background:#a0a0a0;"></div>
<div style="left:868px;top:380px;width:1px;height:22px;background:#e5e5e5;"></div>
<div style="left:868px;top:402px;width:1px;height:393px;background:#a0a0a0;"></div>
<div style="left:968px;top:380px;width:1px;height:22px;background:#e5e5e5;"></div>
<div style="left:968px;top:402px;width:1px;height:393px;background:#a0a0a0;"></div>
<div style="left:1068px;top:380px;width:1px;height:22px;background:#e5e5e5;"></div>
<div style="left:1068px;top:402px;width:1px;height:393px;background:#a0a0a0;"></div>
<div style="left:1168px;top:380px;width:1px;height:22px;background:#e5e5e5;"></div>
<div style="left:1168px;top:402px;width:1px;height:393px;background:#a0a0a0;"></div>
<div style="left:1247px;top:380px;width:1px;height:22px;background:#e5e5e5;"></div>
<div style="left:1247px;top:402px;width:1px;height:393px;background:#a0a0a0;"></div>
<div style="left:1347px;top:380px;width:1px;height:22px;background:#e5e5e5;"></div>
<div style="left:1347px;top:402px;width:1px;height:393px;background:#a0a0a0;"></div>
<div class="clip" style="left:17px;top:380px;width:52.5px;height:22px"><span class="b" style="left:9.5px;top:5px;letter-spacing:0.333px;">Type</span></div>
<div class="clip" style="left:72px;top:380px;width:88.5px;height:22px"><span class="b" style="left:6.5px;top:5px;letter-spacing:0.25px;">CVR_CPR</span></div>
<div class="clip" style="left:163px;top:380px;width:97.5px;height:22px"><span class="b" style="left:6.35px;top:5px;letter-spacing:-0.935px;">Produktionsnr</span></div>
<div class="clip" style="left:263px;top:380px;width:97.5px;height:22px"><span class="b" style="left:7.28px;top:5px;letter-spacing:-0.108px;">AdrBeskyttet</span></div>
<div class="clip" style="left:363px;top:380px;width:146.5px;height:22px"><span class="b" style="left:6.25px;top:5px;letter-spacing:0.332px;">Navn</span></div>
<div class="clip" style="left:512px;top:380px;width:97.5px;height:22px"><span class="b" style="left:6.3px;top:5px;letter-spacing:0.34px;">CONavn</span></div>
<div class="clip" style="left:612px;top:380px;width:97.5px;height:22px"><span class="b" style="left:6.35px;top:5px;letter-spacing:-0.195px;">Modtageradresse</span></div>
<div class="clip" style="left:712px;top:380px;width:97.5px;height:22px"><span class="b" style="left:7.18px;top:5px;letter-spacing:-0.011px;">Adresse2</span></div>
<div class="clip" style="left:812px;top:380px;width:54.5px;height:22px"><span class="b" style="left:6.35px;top:5px;letter-spacing:-0.111px;">Postnr</span></div>
<div class="clip" style="left:869px;top:380px;width:97.5px;height:22px"><span class="b" style="left:6.45px;top:5px;letter-spacing:0.329px;">Bynavn</span></div>
<div class="clip" style="left:969px;top:380px;width:97.5px;height:22px"><span class="b" style="left:6.75px;top:5px;letter-spacing:-0.215px;">Beliggenhedsadresse</span></div>
<div class="clip" style="left:1069px;top:380px;width:97.5px;height:22px"><span class="b" style="left:6.75px;top:5px;letter-spacing:-0.185px;">Beliggenhedsby</span></div>
<div class="clip" style="left:1169px;top:380px;width:76.5px;height:22px"><span class="b" style="left:6.45px;top:5px;letter-spacing:-0.544px;">MatrNr</span></div>
<div class="clip" style="left:1248px;top:380px;width:97.5px;height:22px"><span class="b" style="left:6.55px;top:5px;letter-spacing:0.105px;">LandsejerlavNavn</span></div>
<div class="clip" style="left:1348px;top:380px;width:71.5px;height:22px"><span class="b" style="left:6.65px;top:5px;letter-spacing:0.05px;">LandsejerlavKode</span></div>
<span class="b" style="left:20.95px;top:410px;color:#fff;">E</span>
<span class="b" style="left:366.8px;top:410px;color:#fff;letter-spacing:0.044px;">Tommy Ewi Pede...</span>
<span class="b" style="left:614.85px;top:410px;color:#fff;letter-spacing:0.148px;">Bredekær...</span>
<span class="b" style="left:814.7px;top:410px;color:#fff;letter-spacing:0.107px;">400...</span>
<span class="b" style="left:871.55px;top:410px;color:#fff;letter-spacing:-0.299px;">Roskilde</span>
<span class="b" style="left:971.95px;top:410px;color:#fff;letter-spacing:0.148px;">Bredekær...</span>
<span class="b" style="left:1071.6px;top:410px;color:#fff;letter-spacing:-0.106px;">4000 Rosk...</span>
<span class="b" style="left:1171.6px;top:410px;color:#fff;letter-spacing:0.6px;">4bz</span>
<span class="b" style="left:1250.4px;top:410px;color:#fff;letter-spacing:0.026px;">St. Valby ...</span>
<span class="b" style="left:1350.8px;top:410px;color:#fff;letter-spacing:0.225px;">30153</span>
<span class="b" style="left:20.95px;top:438px;">E</span>
<span class="b" style="left:365.8px;top:438px;letter-spacing:-0.091px;">Søren Nymand</span>
<span class="b" style="left:614.85px;top:438px;letter-spacing:0.148px;">Bredekær...</span>
<span class="b" style="left:814.7px;top:438px;letter-spacing:0.107px;">400...</span>
<span class="b" style="left:871.55px;top:438px;letter-spacing:-0.299px;">Roskilde</span>
<span class="b" style="left:971.95px;top:438px;letter-spacing:0.148px;">Bredekær...</span>
<span class="b" style="left:1071.6px;top:438px;letter-spacing:-0.106px;">4000 Rosk...</span>
<span class="b" style="left:1171.6px;top:438px;letter-spacing:0.6px;">4by</span>
<span class="b" style="left:1250.4px;top:438px;letter-spacing:0.026px;">St. Valby ...</span>
<span class="b" style="left:1350.8px;top:438px;letter-spacing:0.225px;">30153</span>
<span class="b" style="left:20.95px;top:466px;">E</span>
<span class="b" style="left:265.25px;top:466px;letter-spacing:0.005px;">Reklameb...</span>
<span class="b" style="left:365.8px;top:466px;letter-spacing:-0.171px;">Søren Mortensen</span>
<span class="b" style="left:614.85px;top:466px;letter-spacing:0.148px;">Bredekær...</span>
<span class="b" style="left:814.7px;top:466px;letter-spacing:0.107px;">400...</span>
<span class="b" style="left:871.55px;top:466px;letter-spacing:-0.299px;">Roskilde</span>
<span class="b" style="left:971.95px;top:466px;letter-spacing:0.148px;">Bredekær...</span>
<span class="b" style="left:1071.6px;top:466px;letter-spacing:-0.106px;">4000 Rosk...</span>
<span class="b" style="left:1171.6px;top:466px;letter-spacing:-0.35px;">4bf</span>
<span class="b" style="left:1250.4px;top:466px;letter-spacing:0.026px;">St. Valby ...</span>
<span class="b" style="left:1350.8px;top:466px;letter-spacing:0.225px;">30153</span>
<span class="b" style="left:20.95px;top:494px;">E</span>
<span class="b" style="left:265.25px;top:494px;letter-spacing:0.13px;">Lokalvejvi...</span>
<span class="b" style="left:365.8px;top:494px;letter-spacing:-0.076px;">Søren Kimmer Sc...</span>
<span class="b" style="left:614.85px;top:494px;letter-spacing:0.148px;">Bredekær...</span>
<span class="b" style="left:814.7px;top:494px;letter-spacing:0.107px;">400...</span>
<span class="b" style="left:871.55px;top:494px;letter-spacing:-0.299px;">Roskilde</span>
<span class="b" style="left:971.95px;top:494px;letter-spacing:0.148px;">Bredekær...</span>
<span class="b" style="left:1071.6px;top:494px;letter-spacing:-0.106px;">4000 Rosk...</span>
<span class="b" style="left:1171.6px;top:494px;">4bø</span>
<span class="b" style="left:1250.4px;top:494px;letter-spacing:0.026px;">St. Valby ...</span>
<span class="b" style="left:1350.8px;top:494px;letter-spacing:0.225px;">30153</span>
<span class="b" style="left:20.95px;top:522px;">E</span>
<span class="b" style="left:265.25px;top:522px;letter-spacing:0.005px;">Reklameb...</span>
<span class="b" style="left:365.8px;top:522px;letter-spacing:-0.085px;">Susie Andersen</span>
<span class="b" style="left:614.85px;top:522px;letter-spacing:0.148px;">Bredekær...</span>
<span class="b" style="left:814.7px;top:522px;letter-spacing:0.107px;">400...</span>
<span class="b" style="left:871.55px;top:522px;letter-spacing:-0.299px;">Roskilde</span>
<span class="b" style="left:971.95px;top:522px;letter-spacing:0.148px;">Bredekær...</span>
<span class="b" style="left:1071.6px;top:522px;letter-spacing:-0.106px;">4000 Rosk...</span>
<span class="b" style="left:1171.6px;top:522px;">4bc</span>
<span class="b" style="left:1250.4px;top:522px;letter-spacing:0.026px;">St. Valby ...</span>
<span class="b" style="left:1350.8px;top:522px;letter-spacing:0.225px;">30153</span>
<span class="b" style="left:20.95px;top:550px;">E</span>
<span class="b" style="left:365.8px;top:550px;letter-spacing:-0.094px;">Susanne Ankær ...</span>
<span class="b" style="left:614.85px;top:550px;letter-spacing:0.148px;">Bredekær...</span>
<span class="b" style="left:814.7px;top:550px;letter-spacing:0.107px;">400...</span>
<span class="b" style="left:871.55px;top:550px;letter-spacing:-0.299px;">Roskilde</span>
<span class="b" style="left:971.95px;top:550px;letter-spacing:0.148px;">Bredekær...</span>
<span class="b" style="left:1071.6px;top:550px;letter-spacing:-0.106px;">4000 Rosk...</span>
<span class="b" style="left:1171.6px;top:550px;">4aæ</span>
<span class="b" style="left:1250.4px;top:550px;letter-spacing:0.026px;">St. Valby ...</span>
<span class="b" style="left:1350.8px;top:550px;letter-spacing:0.225px;">30153</span>
<span class="b" style="left:21.19px;top:578px;">V</span>
<span class="b" style="left:74.3px;top:578px;letter-spacing:0.058px;">43490516</span>
<span class="b" style="left:265.25px;top:578px;letter-spacing:0.005px;">Reklameb...</span>
<span class="b" style="left:365.75px;top:578px;letter-spacing:-0.147px;">Ringstrøm Holdin...</span>
<span class="b" style="left:514.65px;top:578px;letter-spacing:0.079px;">Michael Br...</span>
<span class="b" style="left:614.85px;top:578px;letter-spacing:0.148px;">Bredekær...</span>
<span class="b" style="left:714.3px;top:578px;letter-spacing:0.01px;">Store Valby</span>
<span class="b" style="left:814.7px;top:578px;letter-spacing:0.107px;">400...</span>
<span class="b" style="left:871.55px;top:578px;letter-spacing:-0.299px;">Roskilde</span>
<span class="b" style="left:971.95px;top:578px;letter-spacing:0.148px;">Bredekær...</span>
<span class="b" style="left:1071.6px;top:578px;letter-spacing:-0.106px;">4000 Rosk...</span>
<span class="b" style="left:1171.6px;top:578px;">4ca</span>
<span class="b" style="left:1250.4px;top:578px;letter-spacing:0.026px;">St. Valby ...</span>
<span class="b" style="left:1350.8px;top:578px;letter-spacing:0.225px;">30153</span>
<span class="b" style="left:21.19px;top:606px;">V</span>
<span class="b" style="left:74.3px;top:606px;letter-spacing:0.058px;">43490516</span>
<span class="b" style="left:165.2px;top:606px;letter-spacing:0.093px;">1028545955</span>
<span class="b" style="left:265.25px;top:606px;letter-spacing:0.005px;">Reklameb...</span>
<span class="b" style="left:365.75px;top:606px;letter-spacing:-0.147px;">Ringstrøm Holdin...</span>
<span class="b" style="left:514.65px;top:606px;letter-spacing:0.079px;">Michael Br...</span>
<span class="b" style="left:614.85px;top:606px;letter-spacing:0.148px;">Bredekær...</span>
<span class="b" style="left:814.7px;top:606px;letter-spacing:0.107px;">400...</span>
<span class="b" style="left:871.55px;top:606px;letter-spacing:-0.299px;">Roskilde</span>
<span class="b" style="left:971.95px;top:606px;letter-spacing:0.148px;">Bredekær...</span>
<span class="b" style="left:1071.6px;top:606px;letter-spacing:-0.106px;">4000 Rosk...</span>
<span class="b" style="left:1171.6px;top:606px;">4ca</span>
<span class="b" style="left:1250.4px;top:606px;letter-spacing:0.026px;">St. Valby ...</span>
<span class="b" style="left:1350.8px;top:606px;letter-spacing:0.225px;">30153</span>
<span class="b" style="left:20.95px;top:634px;">E</span>
<span class="b" style="left:365.75px;top:634px;letter-spacing:-0.004px;">Preben Hansen</span>
<span class="b" style="left:614.85px;top:634px;letter-spacing:0.148px;">Bredekær...</span>
<span class="b" style="left:814.7px;top:634px;letter-spacing:0.107px;">400...</span>
<span class="b" style="left:871.55px;top:634px;letter-spacing:-0.299px;">Roskilde</span>
<span class="b" style="left:971.95px;top:634px;letter-spacing:0.148px;">Bredekær...</span>
<span class="b" style="left:1071.6px;top:634px;letter-spacing:-0.106px;">4000 Rosk...</span>
<span class="b" style="left:1171.6px;top:634px;">4bq</span>
<span class="b" style="left:1250.4px;top:634px;letter-spacing:0.026px;">St. Valby ...</span>
<span class="b" style="left:1350.8px;top:634px;letter-spacing:0.225px;">30153</span>
<span class="b" style="left:20.95px;top:662px;">E</span>
<span class="b" style="left:265.25px;top:662px;letter-spacing:0.13px;">Lokalvejvi...</span>
<span class="b" style="left:365.75px;top:662px;letter-spacing:-0.128px;">Poul Lau Sørensen</span>
<span class="b" style="left:614.85px;top:662px;letter-spacing:0.148px;">Bredekær...</span>
<span class="b" style="left:814.7px;top:662px;letter-spacing:0.107px;">400...</span>
<span class="b" style="left:871.55px;top:662px;letter-spacing:-0.299px;">Roskilde</span>
<span class="b" style="left:971.95px;top:662px;letter-spacing:0.148px;">Bredekær...</span>
<span class="b" style="left:1071.6px;top:662px;letter-spacing:-0.106px;">4000 Rosk...</span>
<span class="b" style="left:1171.6px;top:662px;">4bt</span>
<span class="b" style="left:1250.4px;top:662px;letter-spacing:0.026px;">St. Valby ...</span>
<span class="b" style="left:1350.8px;top:662px;letter-spacing:0.225px;">30153</span>
<span class="b" style="left:20.95px;top:690px;">E</span>
<span class="b" style="left:265.25px;top:690px;letter-spacing:0.13px;">Lokalvejvi...</span>
<span class="b" style="left:365.75px;top:690px;letter-spacing:-0.025px;">Philipp Johnny C...</span>
<span class="b" style="left:614.85px;top:690px;letter-spacing:0.148px;">Bredekær...</span>
<span class="b" style="left:814.7px;top:690px;letter-spacing:0.107px;">400...</span>
<span class="b" style="left:871.55px;top:690px;letter-spacing:-0.299px;">Roskilde</span>
<span class="b" style="left:971.95px;top:690px;letter-spacing:0.148px;">Bredekær...</span>
<span class="b" style="left:1071.6px;top:690px;letter-spacing:-0.106px;">4000 Rosk...</span>
<span class="b" style="left:1171.6px;top:690px;">4bn</span>
<span class="b" style="left:1250.4px;top:690px;letter-spacing:0.026px;">St. Valby ...</span>
<span class="b" style="left:1350.8px;top:690px;letter-spacing:0.225px;">30153</span>
<span class="b" style="left:20.95px;top:718px;">E</span>
<span class="b" style="left:365.75px;top:718px;letter-spacing:-0.124px;">Peter Lange Toft</span>
<span class="b" style="left:614.85px;top:718px;letter-spacing:0.148px;">Bredekær...</span>
<span class="b" style="left:814.7px;top:718px;letter-spacing:0.107px;">400...</span>
<span class="b" style="left:871.55px;top:718px;letter-spacing:-0.299px;">Roskilde</span>
<span class="b" style="left:971.95px;top:718px;letter-spacing:0.148px;">Bredekær...</span>
<span class="b" style="left:1071.6px;top:718px;letter-spacing:-0.106px;">4000 Rosk...</span>
<span class="b" style="left:1171.6px;top:718px;">4bv</span>
<span class="b" style="left:1250.4px;top:718px;letter-spacing:0.026px;">St. Valby ...</span>
<span class="b" style="left:1350.8px;top:718px;letter-spacing:0.225px;">30153</span>
<span class="b" style="left:20.95px;top:746px;">E</span>
<span class="b" style="left:265.25px;top:746px;letter-spacing:0.005px;">Reklameb...</span>
<span class="b" style="left:365.8px;top:746px;letter-spacing:0.011px;">Olaf Jon Finsen</span>
<span class="b" style="left:614.85px;top:746px;letter-spacing:0.148px;">Bredekær...</span>
<span class="b" style="left:814.7px;top:746px;letter-spacing:0.107px;">400...</span>
<span class="b" style="left:871.55px;top:746px;letter-spacing:-0.299px;">Roskilde</span>
<span class="b" style="left:971.95px;top:746px;letter-spacing:0.148px;">Bredekær...</span>
<span class="b" style="left:1071.6px;top:746px;letter-spacing:-0.106px;">4000 Rosk...</span>
<span class="b" style="left:1171.6px;top:746px;">4bx</span>
<span class="b" style="left:1250.4px;top:746px;letter-spacing:0.026px;">St. Valby ...</span>
<span class="b" style="left:1350.8px;top:746px;letter-spacing:0.225px;">30153</span>
<span class="b" style="left:21.19px;top:774px;">V</span>
<span class="b" style="left:73.9px;top:774px;letter-spacing:0.139px;">15705841</span>
<span class="b" style="left:265.25px;top:774px;letter-spacing:0.005px;">Reklameb...</span>
<span class="b" style="left:365.75px;top:774px;letter-spacing:-0.197px;">Mvp Holding Aps</span>
<span class="b" style="left:614.85px;top:774px;letter-spacing:0.148px;">Bredekær...</span>
<span class="b" style="left:714.3px;top:774px;letter-spacing:0.01px;">Store Valby</span>
<span class="b" style="left:814.7px;top:774px;letter-spacing:0.107px;">400...</span>
<span class="b" style="left:871.55px;top:774px;letter-spacing:-0.299px;">Roskilde</span>
<span class="b" style="left:971.95px;top:774px;letter-spacing:0.148px;">Bredekær...</span>
<span class="b" style="left:1071.6px;top:774px;letter-spacing:-0.106px;">4000 Rosk...</span>
<span class="b" style="left:1171.6px;top:774px;">4ba</span>
<span class="b" style="left:1250.4px;top:774px;letter-spacing:0.026px;">St. Valby ...</span>
<span class="b" style="left:1350.8px;top:774px;letter-spacing:0.225px;">30153</span>
<div style="left:17px;top:380px;width:1px;height:414px;background:#a0a0a0;"></div>
<div style="left:17px;top:380px;width:1404px;height:1px;background:#a0a0a0;"></div>
<div style="left:1421px;top:380px;width:17px;height:414px;background:#f0f0f0;"></div>
<div style="left:1421px;top:380px;width:1px;height:414px;background:#fbfbfb;"></div>
<div style="left:1422px;top:397px;width:15px;height:58px;background:#cdcdcd;"></div>
<div style="left:17px;top:794px;width:1421px;height:17px;background:#f0f0f0;"></div>
<div style="left:17px;top:794px;width:1404px;height:1px;background:#fbfbfb;"></div>
<div style="left:34px;top:795px;width:668px;height:15px;background:#cdcdcd;"></div>
<svg class="ic" style="left:1423.5px;top:383.1px" width="12" height="12" viewBox="-6 -6 12 12"><polygon points="0,-3.2 -3.5,0.3 -3.5,3.1 0,-0.4 3.5,3.1 3.5,0.3" fill="#5d5d5d"/></svg>
<svg class="ic" style="left:1423.6px;top:780px" width="12" height="12" viewBox="-6 -6 12 12"><polygon points="0,3.2 -3.5,-0.3 -3.5,-3.1 0,0.4 3.5,-3.1 3.5,-0.3" fill="#5d5d5d"/></svg>
<svg class="ic" style="left:19.05px;top:796.5px" width="12" height="12" viewBox="-6 -6 12 12"><polygon points="-3.2,0 0.3,-3.5 3.1,-3.5 -0.4,0 3.1,3.5 0.3,3.5" fill="#5d5d5d"/></svg>
<svg class="ic" style="left:1406.9px;top:796.5px" width="12" height="12" viewBox="-6 -6 12 12"><polygon points="3.2,0 -0.3,-3.5 -3.1,-3.5 0.4,0 -3.1,3.5 -0.3,3.5" fill="#5d5d5d"/></svg>
<div style="left:17px;top:810px;width:1404px;height:1px;background:#fbfbfb;"></div>
<div style="left:17px;top:794px;width:1px;height:17px;background:#fbfbfb;"></div>
<div style="left:1437px;top:380px;width:1px;height:414px;background:#f6f6f6;"></div>
<span style="left:20.01px;top:812px;letter-spacing:-0.174px;word-spacing:1.0px;">Antal rækker: 92</span>
<div class="cb" style="left:19px;top:830px;border-color:#333"></div>
<span style="left:38.05px;top:829px;letter-spacing:-0.164px;word-spacing:1.0px;">Markering på celleniveau</span>
<div class="btn" style="left:884px;top:819px;width:156px;height:25px"></div>
<div class="ic" style="left:903px;top:824px"><svg width="15" height="16" viewBox="0 0 15 16"><path d="M0.5 0.6 H11 L13.5 3 V15.4 H0.5Z" fill="#fdfeff" stroke="#5d92d4" stroke-width="1"/><path d="M10.8 0.4 L13.8 3.2" stroke="#222" stroke-width="1" stroke-dasharray="1 0.6" fill="none"/><polygon points="10.2,1.2 10.2,4.4 13,4.4" fill="#d4d8dc"/><rect x="4" y="3" width="5" height="1" rx="0.4" fill="#c00808"/><rect x="2" y="6.1" width="1" height="0.9" fill="#22338a"/><rect x="4" y="6.1" width="3" height="0.9" fill="#22338a"/><rect x="8" y="6.1" width="4" height="0.9" fill="#22338a"/><rect x="2" y="8.1" width="1" height="0.9" fill="#22338a"/><rect x="4" y="8.1" width="3" height="0.9" fill="#22338a"/><rect x="8" y="8.1" width="4" height="0.9" fill="#22338a"/><rect x="2" y="10.1" width="1" height="0.9" fill="#22338a"/><rect x="4" y="10.1" width="3" height="0.9" fill="#22338a"/><rect x="8" y="10.1" width="4" height="0.9" fill="#22338a"/><rect x="2" y="12.1" width="1" height="0.9" fill="#22338a"/><rect x="4" y="12.1" width="3" height="0.9" fill="#22338a"/><rect x="8" y="12.1" width="4" height="0.9" fill="#22338a"/></svg></div>
<span style="left:922.51px;top:825px;letter-spacing:-0.17px;word-spacing:1.0px;">Viste kolonner</span>
<div class="btn" style="left:1050px;top:819px;width:132px;height:25px"></div>
<div class="ic" style="left:1077.6px;top:821.6px"><svg width="18" height="18" viewBox="0 0 18 18"><ellipse cx="9.6" cy="16.2" rx="8.4" ry="1.9" fill="#9aa0b0" opacity="0.5"/><path d="M3.4 0.6 L6 5.8" stroke="#cb8420" stroke-width="2.2" stroke-linecap="butt" fill="none"/><path d="M3.2 1.6 L5.8 6.2" stroke="#a8640c" stroke-width="0.8" stroke-dasharray="1 1" fill="none"/><polygon points="5,6.4 8.6,5.2 16.6,12 16.4,14 13.4,16.4 9.4,17 7.8,16.2 5.4,9" fill="#f2d416"/><path d="M7.8 9 L10.4 16 M9.8 8 L13.8 15 M11.4 7.8 L15.8 13" stroke="#c8a008" stroke-width="0.7" stroke-dasharray="1 1" fill="none"/><path d="M5.2 8.6 L9 6.2" stroke="#c41010" stroke-width="2" fill="none"/><path d="M5.4 9.2 L8.6 7.2" stroke="#7a0808" stroke-width="0.7" fill="none"/></svg></div>
<span style="left:1101.55px;top:825px;letter-spacing:-0.484px;">Rens</span>
<div class="btn" style="left:1194px;top:819px;width:126px;height:25px"></div>
<div class="ic" style="left:1207px;top:824px"><svg width="17" height="17" viewBox="0 0 17 17"><g><path d="M1 1 H6 L5 2.6 L7.9 4.8 V6.2 L6.2 7.9 H4.8 L2.6 5 L1 6Z" fill="#3592e4"/><path d="M0 0 H7 V1 H1 V7 H0Z" fill="#1261b2"/><rect x="5" y="2" width="1" height="1" fill="#0f4f9c"/><rect x="2" y="5" width="1" height="1" fill="#0f4f9c"/><rect x="7" y="4" width="1" height="2" fill="#0f4f9c"/><rect x="4" y="7" width="2" height="1" fill="#0f4f9c"/></g><g transform="translate(17,0) scale(-1,1)"><path d="M1 1 H6 L5 2.6 L7.9 4.8 V6.2 L6.2 7.9 H4.8 L2.6 5 L1 6Z" fill="#3592e4"/><path d="M0 0 H7 V1 H1 V7 H0Z" fill="#1261b2"/><rect x="5" y="2" width="1" height="1" fill="#0f4f9c"/><rect x="2" y="5" width="1" height="1" fill="#0f4f9c"/><rect x="7" y="4" width="1" height="2" fill="#0f4f9c"/><rect x="4" y="7" width="2" height="1" fill="#0f4f9c"/></g><g transform="translate(0,17) scale(1,-1)"><path d="M1 1 H6 L5 2.6 L7.9 4.8 V6.2 L6.2 7.9 H4.8 L2.6 5 L1 6Z" fill="#3592e4"/><path d="M0 0 H7 V1 H1 V7 H0Z" fill="#1261b2"/><rect x="5" y="2" width="1" height="1" fill="#0f4f9c"/><rect x="2" y="5" width="1" height="1" fill="#0f4f9c"/><rect x="7" y="4" width="1" height="2" fill="#0f4f9c"/><rect x="4" y="7" width="2" height="1" fill="#0f4f9c"/></g><g transform="translate(17,17) scale(-1,-1)"><path d="M1 1 H6 L5 2.6 L7.9 4.8 V6.2 L6.2 7.9 H4.8 L2.6 5 L1 6Z" fill="#3592e4"/><path d="M0 0 H7 V1 H1 V7 H0Z" fill="#1261b2"/><rect x="5" y="2" width="1" height="1" fill="#0f4f9c"/><rect x="2" y="5" width="1" height="1" fill="#0f4f9c"/><rect x="7" y="4" width="1" height="2" fill="#0f4f9c"/><rect x="4" y="7" width="2" height="1" fill="#0f4f9c"/></g></svg></div>
<span style="left:1230.05px;top:825px;letter-spacing:-0.493px;">Maksimer</span>
<div class="btn" style="left:1330px;top:819px;width:108px;height:25px"></div>
<div class="ic" style="left:1337px;top:823px"><svg width="23" height="21" viewBox="0 0 23 21"><path d="M0.5 0.5 H19.4 V16 L15 20.4 H0.5Z" fill="url(#pg)"/><path d="M0.5 20.4 V0.5 H19.4" fill="none" stroke="#9a9a9a" stroke-width="1"/><path d="M19.2 16 L15 20.2 L14.6 17.2 Z" fill="#f4f4f4" stroke="#cfcfcf" stroke-width="0.6"/><path d="M8.2 6.4 H12.4 V3.4 Q12.6 2.6 13.6 3.2 L21.6 9.2 L13.4 15.6 Q12.4 16 12.4 15 V12.2 H8.2 Q7.6 12.2 7.6 11.6 V7 Q7.6 6.4 8.2 6.4Z" fill="url(#arr)"/><path d="M8.2 6.9 H12.9 V3.8" fill="none" stroke="#3f6ea8" stroke-width="0.6" opacity="0.6"/></svg></div>
<span style="left:1362.05px;top:826px;letter-spacing:-0.219px;">Eksporter</span>
</body></html>
